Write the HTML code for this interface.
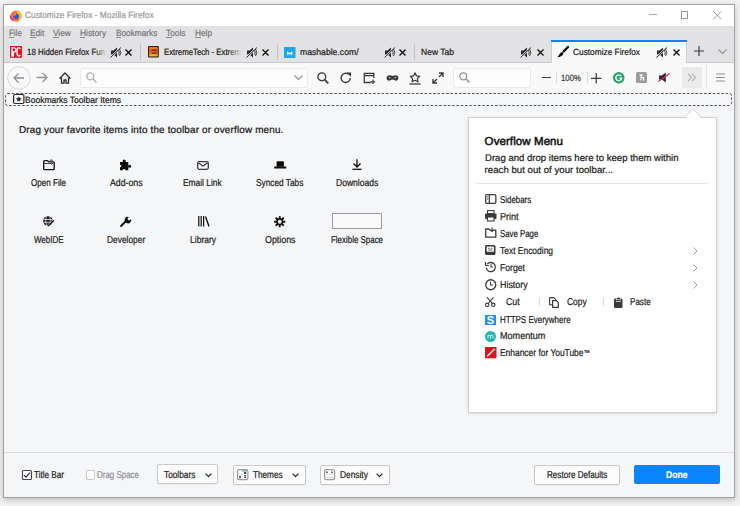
<!DOCTYPE html>
<html><head><meta charset="utf-8">
<style>
*{box-sizing:border-box;margin:0;padding:0}
html,body{width:740px;height:506px;overflow:hidden;background:#f2f2f2;font-family:"Liberation Sans",sans-serif;position:relative}
.t{position:absolute;white-space:nowrap;line-height:1;transform-origin:0 0;-webkit-text-stroke:0.22px currentColor;text-rendering:geometricPrecision}
.r{position:absolute}
svg{position:absolute;overflow:visible}
</style></head><body>
<div class="r" style="left:3.00px;top:4.00px;width:732.00px;height:494.00px;border:1px solid #a3a3a3;background:#f5f6f7;box-shadow:0 2px 6px rgba(0,0,0,.22)"></div>
<div class="r" style="left:4.00px;top:5.00px;width:730.00px;height:21.00px;background:#fff"></div>
<svg style="left:9.50px;top:9.50px" width="12" height="12" viewBox="0 0 12 12"><circle cx="6" cy="6" r="5.6" fill="#ff7139"/><path d="M6 0.4a5.6 5.6 0 0 1 5.6 5.6a5.6 5.6 0 0 1-2 4.3" fill="#ffbd2e"/><path d="M0.5 5.5a5.6 5.6 0 0 0 3 5.2" stroke="#e31587" stroke-width="1.2" fill="none"/><circle cx="6.2" cy="6.2" r="2.8" fill="#2a5ad9"/><path d="M3.4 5.6q1-2.6 3.8-2.4q-1.6 0.6-1.6 2.2" fill="#ff9a2e"/></svg>
<div class="t" style="left:25.30px;top:11.38px;font-size:9.00px;color:#9a9a9a;transform:scaleX(0.929);letter-spacing:0.000px;">Customize Firefox - Mozilla Firefox</div>
<div class="r" style="left:649.00px;top:14.20px;width:7.50px;height:1.00px;background:#a8a8a8"></div>
<div class="r" style="left:680.50px;top:11.00px;width:7.50px;height:7.50px;border:1px solid #9a9a9a"></div>
<svg style="left:713.00px;top:11.00px" width="8.5" height="8.5" viewBox="0 0 8.5 8.5"><path d="M0.3 0.3L8.2 8.2M8.2 0.3L0.3 8.2" stroke="#999" stroke-width="1"/></svg>
<div class="r" style="left:4.00px;top:26.00px;width:730.00px;height:36.00px;background:#e2e2e4"></div>
<div class="t" style="left:8.60px;top:29.18px;font-size:9.00px;color:#77777c;transform:scaleX(0.883);letter-spacing:0.000px;">File</div>
<div class="r" style="left:8.90px;top:37.00px;width:5.50px;height:0.90px;background:#8a8a8f"></div>
<div class="t" style="left:29.80px;top:29.18px;font-size:9.00px;color:#77777c;transform:scaleX(0.916);letter-spacing:0.000px;">Edit</div>
<div class="r" style="left:30.10px;top:37.00px;width:5.50px;height:0.90px;background:#8a8a8f"></div>
<div class="t" style="left:53.00px;top:29.18px;font-size:9.00px;color:#77777c;transform:scaleX(0.920);letter-spacing:0.000px;">View</div>
<div class="r" style="left:53.30px;top:37.00px;width:5.50px;height:0.90px;background:#8a8a8f"></div>
<div class="t" style="left:79.50px;top:29.18px;font-size:9.00px;color:#77777c;transform:scaleX(0.932);letter-spacing:0.000px;">History</div>
<div class="r" style="left:79.80px;top:37.00px;width:5.50px;height:0.90px;background:#8a8a8f"></div>
<div class="t" style="left:115.50px;top:29.18px;font-size:9.00px;color:#77777c;transform:scaleX(0.918);letter-spacing:0.000px;">Bookmarks</div>
<div class="r" style="left:115.80px;top:37.00px;width:5.50px;height:0.90px;background:#8a8a8f"></div>
<div class="t" style="left:166.00px;top:29.18px;font-size:9.00px;color:#77777c;transform:scaleX(0.923);letter-spacing:0.000px;">Tools</div>
<div class="r" style="left:166.30px;top:37.00px;width:5.50px;height:0.90px;background:#8a8a8f"></div>
<div class="t" style="left:195.00px;top:29.18px;font-size:9.00px;color:#77777c;transform:scaleX(0.918);letter-spacing:0.000px;">Help</div>
<div class="r" style="left:195.30px;top:37.00px;width:5.50px;height:0.90px;background:#8a8a8f"></div>
<div class="r" style="left:4.00px;top:62.00px;width:730.00px;height:1.00px;background:#c8c8cb"></div>
<svg style="left:10.30px;top:45.80px" width="12" height="11.8" viewBox="0 0 12 11.8"><rect width="12" height="11.8" fill="#e4151f"/><path d="M2 10V1.8h2.2q1.8 0 1.8 2.1t-1.8 2.1H3.3V10z" fill="none" stroke="#fff" stroke-width="1.3"/><path d="M10.3 3.2q-0.3-1.4-1.5-1.4q-1.8 0-1.8 4.1t1.8 4.1q1.2 0 1.5-1.4" fill="none" stroke="#fff" stroke-width="1.4"/></svg>
<div class="t" style="left:27.00px;top:48.38px;font-size:9.00px;color:#1c1c20;transform:scaleX(0.876);letter-spacing:0.000px;">18 Hidden Firefox Fun</div>
<div class="r" style="left:95.00px;top:44.00px;width:12.00px;height:16.00px;background:linear-gradient(90deg,rgba(226,226,228,0),#e2e2e4)"></div>
<svg style="left:110.00px;top:46.50px" width="12" height="11" viewBox="0 0 12 11"><path d="M1 3.5h2.5l3.5-3v10l-3.5-3H1z" fill="#2a2a2e"/><path d="M0.5 10.5L11 0.5" stroke="#e2e2e4" stroke-width="2"/><path d="M0.5 10.5L11 0.5" stroke="#2a2a2e" stroke-width="1"/><path d="M8.5 3.5q1.5 2 0 4M9.5 2q2.5 3.5 0 7" stroke="#2a2a2e" stroke-width="0.9" fill="none"/></svg>
<svg style="left:124.50px;top:48.50px" width="7" height="7" viewBox="0 0 7 7"><path d="M0.5 0.5L6.5 6.5M6.5 0.5L0.5 6.5" stroke="#0c0c0d" stroke-width="1.3"/></svg>
<div class="r" style="left:140.00px;top:43.50px;width:1.00px;height:16.50px;background:#c2c3c6"></div>
<svg style="left:148.00px;top:46.00px" width="10.8" height="11.5" viewBox="0 0 10.8 11.5"><defs><linearGradient id="eg" x1="0" y1="0" x2="0" y2="1"><stop offset="0" stop-color="#ff7a1a"/><stop offset="0.5" stop-color="#f25a14"/><stop offset="1" stop-color="#ffc21a"/></linearGradient></defs><rect width="10.8" height="11.5" rx="0.8" fill="#2a2018"/><rect x="1.1" y="1.1" width="8.6" height="9.3" fill="url(#eg)"/><path d="M3.6 3.5h5v1.2h-5zM3.6 6.6h5v1.2h-5z" fill="#3a2a1c"/></svg>
<div class="t" style="left:164.00px;top:48.38px;font-size:9.00px;color:#1c1c20;transform:scaleX(0.865);letter-spacing:0.000px;">ExtremeTech - Extrem</div>
<div class="r" style="left:228.00px;top:44.00px;width:14.00px;height:16.00px;background:linear-gradient(90deg,rgba(226,226,228,0),#e2e2e4)"></div>
<svg style="left:246.00px;top:46.50px" width="12" height="11" viewBox="0 0 12 11"><path d="M1 3.5h2.5l3.5-3v10l-3.5-3H1z" fill="#2a2a2e"/><path d="M0.5 10.5L11 0.5" stroke="#e2e2e4" stroke-width="2"/><path d="M0.5 10.5L11 0.5" stroke="#2a2a2e" stroke-width="1"/><path d="M8.5 3.5q1.5 2 0 4M9.5 2q2.5 3.5 0 7" stroke="#2a2a2e" stroke-width="0.9" fill="none"/></svg>
<svg style="left:261.50px;top:48.50px" width="7" height="7" viewBox="0 0 7 7"><path d="M0.5 0.5L6.5 6.5M6.5 0.5L0.5 6.5" stroke="#0c0c0d" stroke-width="1.3"/></svg>
<div class="r" style="left:277.00px;top:43.50px;width:1.00px;height:16.50px;background:#c2c3c6"></div>
<svg style="left:284.00px;top:46.60px" width="11.5" height="11" viewBox="0 0 11.5 11"><rect width="11.5" height="11" fill="#1ea7e8"/><path d="M3.8 8.3v-3l2 1.8l2-1.8v3" stroke="#fff" stroke-width="1.1" fill="none"/></svg>
<div class="t" style="left:300.00px;top:48.38px;font-size:9.00px;color:#1c1c20;transform:scaleX(0.959);letter-spacing:0.000px;">mashable.com/</div>
<svg style="left:384.00px;top:46.50px" width="12" height="11" viewBox="0 0 12 11"><path d="M1 3.5h2.5l3.5-3v10l-3.5-3H1z" fill="#2a2a2e"/><path d="M0.5 10.5L11 0.5" stroke="#e2e2e4" stroke-width="2"/><path d="M0.5 10.5L11 0.5" stroke="#2a2a2e" stroke-width="1"/><path d="M8.5 3.5q1.5 2 0 4M9.5 2q2.5 3.5 0 7" stroke="#2a2a2e" stroke-width="0.9" fill="none"/></svg>
<svg style="left:398.50px;top:48.50px" width="7" height="7" viewBox="0 0 7 7"><path d="M0.5 0.5L6.5 6.5M6.5 0.5L0.5 6.5" stroke="#0c0c0d" stroke-width="1.3"/></svg>
<div class="r" style="left:414.00px;top:43.50px;width:1.00px;height:16.50px;background:#c2c3c6"></div>
<div class="t" style="left:421.00px;top:48.38px;font-size:9.00px;color:#1c1c20;transform:scaleX(0.947);letter-spacing:0.000px;">New Tab</div>
<svg style="left:520.00px;top:46.50px" width="12" height="11" viewBox="0 0 12 11"><path d="M1 3.5h2.5l3.5-3v10l-3.5-3H1z" fill="#2a2a2e"/><path d="M0.5 10.5L11 0.5" stroke="#e2e2e4" stroke-width="2"/><path d="M0.5 10.5L11 0.5" stroke="#2a2a2e" stroke-width="1"/><path d="M8.5 3.5q1.5 2 0 4M9.5 2q2.5 3.5 0 7" stroke="#2a2a2e" stroke-width="0.9" fill="none"/></svg>
<svg style="left:536.50px;top:48.50px" width="7" height="7" viewBox="0 0 7 7"><path d="M0.5 0.5L6.5 6.5M6.5 0.5L0.5 6.5" stroke="#0c0c0d" stroke-width="1.3"/></svg>
<div class="r" style="left:550.50px;top:40.00px;width:136.50px;height:23.00px;background:#f9f9fa;border-left:1px solid #cfd0d3;border-right:1px solid #cfd0d3"></div>
<div class="r" style="left:550.50px;top:40.00px;width:136.50px;height:2.00px;background:#0a84ff"></div>
<svg style="left:557.00px;top:46.00px" width="12" height="11.5" viewBox="0 0 12 11.5"><path d="M11 1L6.6 5.4" stroke="#0c0c0d" stroke-width="2.3" stroke-linecap="round"/><path d="M5.4 6.1q1.2 0.4 1 1.6q-0.6 1.6-2.4 2.6q-1.8 0.9-3.7 1q1.2-1.2 2-2.8q0.9-2.2 3.1-2.4z" fill="#0c0c0d"/></svg>
<div class="t" style="left:573.00px;top:48.38px;font-size:9.00px;color:#1c1c20;transform:scaleX(0.924);letter-spacing:0.000px;">Customize Firefox</div>
<svg style="left:656.00px;top:46.50px" width="12" height="11" viewBox="0 0 12 11"><path d="M1 3.5h2.5l3.5-3v10l-3.5-3H1z" fill="#2a2a2e"/><path d="M0.5 10.5L11 0.5" stroke="#e2e2e4" stroke-width="2"/><path d="M0.5 10.5L11 0.5" stroke="#2a2a2e" stroke-width="1"/><path d="M8.5 3.5q1.5 2 0 4M9.5 2q2.5 3.5 0 7" stroke="#2a2a2e" stroke-width="0.9" fill="none"/></svg>
<svg style="left:673.00px;top:48.50px" width="7" height="7" viewBox="0 0 7 7"><path d="M0.5 0.5L6.5 6.5M6.5 0.5L0.5 6.5" stroke="#0c0c0d" stroke-width="1.3"/></svg>
<svg style="left:694.00px;top:46.00px" width="10" height="10" viewBox="0 0 10 10"><path d="M5 0v10M0 5h10" stroke="#38383d" stroke-width="1.15"/></svg>
<svg style="left:718.00px;top:49.00px" width="9" height="5" viewBox="0 0 9 5"><path d="M0.5 0.5L4.5 4.5L8.5 0.5" stroke="#96969c" stroke-width="1.2" fill="none"/></svg>
<div class="r" style="left:4.00px;top:63.00px;width:730.00px;height:28.00px;background:#f9f9fa"></div>
<svg style="left:6.50px;top:65.50px" width="24" height="24" viewBox="0 0 24 24"><circle cx="12" cy="12" r="11.3" fill="#f9f9fa" stroke="#d7d7db" stroke-width="1"/><path d="M17 12H7M11.5 7.5L7 12l4.5 4.5" stroke="#8f8f9d" stroke-width="1.3" fill="none"/></svg>
<svg style="left:36.00px;top:72.00px" width="12" height="11" viewBox="0 0 12 11"><path d="M0.5 5.5h10.5M6.5 1l4.5 4.5L6.5 10" stroke="#8f8f9d" stroke-width="1.3" fill="none"/></svg>
<svg style="left:59.00px;top:71.50px" width="12" height="12" viewBox="0 0 12 12"><path d="M6 1L0.8 6.2h1.7v5h2.5v-3.2h2v3.2h2.5v-5h1.7z" stroke="#2a2a2e" stroke-width="1.3" fill="none" stroke-linejoin="round"/></svg>
<div class="r" style="left:80.00px;top:67.50px;width:227.50px;height:20.00px;background:#fdfdfd;border:1px solid #ebebed;border-radius:2px"></div>
<svg style="left:86.00px;top:72.00px" width="11" height="11" viewBox="0 0 11 11"><circle cx="4.3" cy="4.3" r="3.5" stroke="#b1b1b3" stroke-width="1.3" fill="none"/><path d="M6.8 6.8L10.5 10.5" stroke="#b1b1b3" stroke-width="1.5"/></svg>
<svg style="left:294.00px;top:75.00px" width="9" height="5" viewBox="0 0 9 5"><path d="M0.5 0.5L4.5 4.5L8.5 0.5" stroke="#8f8f9d" stroke-width="1.1" fill="none"/></svg>
<svg style="left:317.00px;top:72.00px" width="12" height="12" viewBox="0 0 12 12"><circle cx="4.8" cy="4.8" r="3.9" stroke="#3a3a3f" stroke-width="1.4" fill="none"/><path d="M7.6 7.6L11.3 11.3" stroke="#3a3a3f" stroke-width="1.7"/></svg>
<svg style="left:340.00px;top:72.00px" width="12" height="12" viewBox="0 0 12 12"><path d="M10.3 6A4.6 4.6 0 1 1 8.6 2.3" stroke="#3a3a3f" stroke-width="1.4" fill="none"/><path d="M6.5 0.5h4.5v4.5z" fill="#3a3a3f"/></svg>
<svg style="left:363.00px;top:72.00px" width="13" height="12" viewBox="0 0 13 12"><path d="M8 10.5H1.3V1.3h9.5V6" stroke="#3a3a3f" stroke-width="1.3" fill="none"/><path d="M1.3 3.6h9.5" stroke="#3a3a3f" stroke-width="1.3"/><path d="M10 7.5v4.5M7.7 9.8h4.5" stroke="#3a3a3f" stroke-width="1.2"/></svg>
<svg style="left:386.00px;top:73.50px" width="13" height="8" viewBox="0 0 13 8"><path d="M1 2.2C2.5 0.8 5 1 6.5 2C8 1 10.5 0.8 12 2.2C12.8 3.5 12.5 6 10.8 6.6C9.2 7.2 7.8 5.6 6.5 5.6S3.8 7.2 2.2 6.6C0.5 6 0.2 3.5 1 2.2z" fill="#3a3a3f"/><path d="M2.4 3.6q1.3-0.9 2.6 0.3q-1.3 0.8-2.6-0.3zM10.6 3.6q-1.3-0.9-2.6 0.3q1.3 0.8 2.6-0.3z" fill="#f9f9fa"/></svg>
<svg style="left:409.00px;top:71.50px" width="12" height="13" viewBox="0 0 12 13"><path d="M6 0.8l1.5 3.1l3.3 0.4l-2.4 2.3l0.6 3.2L6 8.2L3 9.8l0.6-3.2L1.2 4.3l3.3-0.4z" stroke="#3a3a3f" stroke-width="1.2" fill="none" stroke-linejoin="round"/><path d="M0.5 12h11" stroke="#3a3a3f" stroke-width="1.3"/></svg>
<svg style="left:432.00px;top:72.00px" width="12" height="12" viewBox="0 0 12 12"><path d="M7 1h4v4M11 1L7 5M5 11H1V7M1 11l4-4" stroke="#3a3a3f" stroke-width="1.4" fill="none"/></svg>
<div class="r" style="left:452.50px;top:67.50px;width:78.00px;height:20.00px;background:#fdfdfd;border:1px solid #ebebed;border-radius:2px"></div>
<svg style="left:459.00px;top:72.00px" width="11" height="11" viewBox="0 0 11 11"><circle cx="4.3" cy="4.3" r="3.5" stroke="#8f8f9d" stroke-width="1.3" fill="none"/><path d="M6.8 6.8L10.5 10.5" stroke="#8f8f9d" stroke-width="1.5"/></svg>
<div class="r" style="left:541.50px;top:76.80px;width:9.00px;height:1.30px;background:#3a3a3f"></div>
<div class="r" style="left:556.00px;top:72.00px;width:1.00px;height:10.50px;background:#dcdcde"></div>
<div class="t" style="left:561.00px;top:73.58px;font-size:9.00px;color:#3a3a3f;transform:scaleX(0.869);letter-spacing:0.000px;">100%</div>
<div class="r" style="left:587.00px;top:72.00px;width:1.00px;height:10.50px;background:#dcdcde"></div>
<svg style="left:591.00px;top:72.50px" width="10.5" height="10.5" viewBox="0 0 10.5 10.5"><path d="M5.25 0v10.5M0 5.25h10.5" stroke="#3a3a3f" stroke-width="1.25"/></svg>
<svg style="left:613.00px;top:72.00px" width="11.5" height="11.5" viewBox="0 0 11.5 11.5"><circle cx="5.75" cy="5.75" r="5.75" fill="#1ea362"/><path d="M8.2 4.2A2.9 2.9 0 1 0 8.6 6.3H6.3" stroke="#fff" stroke-width="1.4" fill="none"/></svg>
<svg style="left:636.00px;top:72.00px" width="11" height="11" viewBox="0 0 11 11"><rect width="11" height="11" rx="1.5" fill="#9d9d9d"/><path d="M3.5 3h3.5M5 3v5.5M5 5.5h2.5v3" stroke="#fff" stroke-width="1.2" fill="none"/></svg>
<svg style="left:658.00px;top:72.00px" width="12" height="11" viewBox="0 0 12 11"><path d="M1 3.5h2.8l4-3v10l-4-3H1z" fill="#2a2a2e"/><path d="M0.3 9.5L11.7 1.5" stroke="#e22850" stroke-width="1.3"/></svg>
<div class="r" style="left:682.00px;top:67.00px;width:20.00px;height:21.00px;background:#ebebed;border-radius:1px"></div>
<svg style="left:687.00px;top:73.00px" width="10" height="9" viewBox="0 0 10 9"><path d="M1 0.8l3.5 3.7L1 8.2M5 0.8l3.5 3.7L5 8.2" stroke="#b1b1b3" stroke-width="1.1" fill="none"/></svg>
<div class="r" style="left:706.00px;top:65.00px;width:1.00px;height:24.00px;background:#e4e4e6"></div>
<svg style="left:716.00px;top:73.00px" width="9" height="9" viewBox="0 0 9 9"><path d="M0 1h9M0 4.5h9M0 8h9" stroke="#8f8f9d" stroke-width="1.2"/></svg>
<svg style="left:5.00px;top:93.00px" width="727" height="13" viewBox="0 0 727 13"><rect x="0.5" y="0.5" width="726" height="12" rx="2" fill="none" stroke="#55555a" stroke-width="1" stroke-dasharray="2.6 1.7"/></svg>
<svg style="left:13.00px;top:93.00px" width="11.5" height="11" viewBox="0 0 11.5 11"><rect x="0.6" y="1.5" width="10.3" height="9" rx="1.2" stroke="#2a2a2e" stroke-width="1.2" fill="none"/><path d="M5.75 3.2l0.9 1.8l2 0.25l-1.45 1.4l0.35 1.95L5.75 7.7L4 8.6l0.35-1.95L2.9 5.25l2-0.25z" fill="#2a2a2e"/></svg>
<div class="t" style="left:24.50px;top:95.88px;font-size:9.00px;color:#1c1c20;transform:scaleX(0.947);letter-spacing:0.000px;">Bookmarks Toolbar Items</div>
<div class="t" style="left:19.00px;top:125.52px;font-size:9.90px;color:#1c1c20;transform:scaleX(1.000);letter-spacing:0.176px;-webkit-text-stroke:0.22px #0c0c0d;">Drag your favorite items into the toolbar or overflow menu.</div>
<div class="t" style="left:31.00px;top:178.53px;font-size:10.00px;color:#1c1c20;transform:scaleX(0.807);letter-spacing:0.000px;">Open File</div>
<div class="t" style="left:109.50px;top:178.53px;font-size:10.00px;color:#1c1c20;transform:scaleX(0.873);letter-spacing:0.000px;">Add-ons</div>
<div class="t" style="left:183.40px;top:178.53px;font-size:10.00px;color:#1c1c20;transform:scaleX(0.837);letter-spacing:0.000px;">Email Link</div>
<div class="t" style="left:256.40px;top:178.53px;font-size:10.00px;color:#1c1c20;transform:scaleX(0.829);letter-spacing:0.000px;">Synced Tabs</div>
<div class="t" style="left:336.00px;top:178.53px;font-size:10.00px;color:#1c1c20;transform:scaleX(0.855);letter-spacing:0.000px;">Downloads</div>
<div class="t" style="left:34.00px;top:235.53px;font-size:10.00px;color:#1c1c20;transform:scaleX(0.796);letter-spacing:0.000px;">WebIDE</div>
<div class="t" style="left:106.80px;top:235.53px;font-size:10.00px;color:#1c1c20;transform:scaleX(0.838);letter-spacing:0.000px;">Developer</div>
<div class="t" style="left:189.60px;top:235.53px;font-size:10.00px;color:#1c1c20;transform:scaleX(0.854);letter-spacing:0.000px;">Library</div>
<div class="t" style="left:264.80px;top:235.53px;font-size:10.00px;color:#1c1c20;transform:scaleX(0.885);letter-spacing:0.000px;">Options</div>
<div class="t" style="left:331.00px;top:235.53px;font-size:10.00px;color:#1c1c20;transform:scaleX(0.793);letter-spacing:0.000px;">Flexible Space</div>
<svg style="left:42.80px;top:158.80px" width="11.5" height="11" viewBox="0 0 11.5 11"><path d="M0.7 2.6q0-1 1-1h2.8l1.2 1.2h4.6q0.9 0 0.9 0.9v6q0 0.9-0.9 0.9H1.6q-0.9 0-0.9-0.9z" stroke="#0c0c0d" stroke-width="1.3" fill="none" stroke-linejoin="round"/><path d="M1 4.5h9.2" stroke="#0c0c0d" stroke-width="0.8"/><path d="M8.3 5.8V0.8M6.8 2.2l1.5-1.5l1.5 1.5" stroke="#6a6a6e" stroke-width="1.1" fill="none"/></svg>
<svg style="left:120.00px;top:158.80px" width="11.5" height="11.5" viewBox="0 0 11.5 11.5"><rect x="0" y="3" width="8.3" height="8.3" fill="#0c0c0d"/><circle cx="4.2" cy="2" r="1.6" fill="#0c0c0d"/><circle cx="9.6" cy="7.2" r="1.5" fill="#0c0c0d"/><circle cx="0" cy="7" r="1.3" fill="#f5f6f7"/><circle cx="4.2" cy="11.3" r="1.3" fill="#f5f6f7"/></svg>
<svg style="left:196.50px;top:160.50px" width="12" height="9" viewBox="0 0 12 9"><rect x="0.7" y="0.7" width="10.6" height="7.6" rx="1.5" stroke="#3a3a3f" stroke-width="1.3" fill="none"/><path d="M1.5 2l4.5 3l4.5-3" stroke="#3a3a3f" stroke-width="1.2" fill="none"/></svg>
<svg style="left:273.50px;top:160.50px" width="12.5" height="8" viewBox="0 0 12.5 8"><path d="M2.6 1.3q0-1 1-1h5.3q1 0 1 1V5.8H2.6z" fill="#0c0c0d"/><path d="M0.2 5.6h12.1v1.1q0 0.9-0.9 0.9H1.1q-0.9 0-0.9-0.9z" fill="#0c0c0d"/></svg>
<svg style="left:351.80px;top:159.00px" width="10" height="11" viewBox="0 0 10 11"><path d="M5 0.3v7.5M1.5 4.5L5 8l3.5-3.5" stroke="#0c0c0d" stroke-width="1.3" fill="none"/><path d="M0.5 10.3h9" stroke="#0c0c0d" stroke-width="1.3"/></svg>
<svg style="left:42.50px;top:215.80px" width="12" height="11.5" viewBox="0 0 12 11.5"><circle cx="5" cy="5" r="4.8" fill="#1a1a1d"/><path d="M0.6 3.5h8.8M0.4 6.3h8M3.2 0.5q-1.2 4.5 0.3 9M6.6 0.5q1.2 3 0.5 5" stroke="#f5f6f7" stroke-width="0.75" fill="none"/><path d="M4.2 10.8l0.4-1.8l5.6-5.4l1.4 1.4l-5.6 5.4z" fill="#1a1a1d" stroke="#f5f6f7" stroke-width="0.6"/></svg>
<svg style="left:120.00px;top:215.50px" width="10.5" height="11" viewBox="0 0 10.5 11"><path d="M1 10L5.5 5.5" stroke="#0c0c0d" stroke-width="1.8" stroke-linecap="round"/><path d="M5 5.5a3.2 3.2 0 0 1 4-4.5L7.5 2.5l0.6 1.4l1.4 0.6L11 3a3.2 3.2 0 0 1-4.5 4z" fill="#0c0c0d"/></svg>
<svg style="left:197.50px;top:216.00px" width="11.5" height="10.5" viewBox="0 0 11.5 10.5"><path d="M0.8 0v10.5M3.2 0v10.5M5.6 0v10.5" stroke="#0c0c0d" stroke-width="1.2"/><path d="M7.5 0.5l3.5 10" stroke="#0c0c0d" stroke-width="1.3"/></svg>
<svg style="left:274.00px;top:215.50px" width="11.5" height="11.5" viewBox="0 0 11.5 11.5"><g transform="translate(5.75 5.75)"><path d="M0-5.6V5.6M-5.6 0H5.6M-4 -4L4 4M4 -4L-4 4" stroke="#0c0c0d" stroke-width="1.9"/><circle r="3.4" fill="#0c0c0d"/><circle r="1.9" fill="#f5f6f7"/></g></svg>
<div class="r" style="left:331.50px;top:212.50px;width:50.50px;height:16.50px;border:1px solid #9d9da1;background:#fafafb"></div>
<div class="r" style="left:468.00px;top:116.50px;width:248.50px;height:296.00px;background:#fff;border:1px solid #d0d0d3;box-shadow:0 1px 3px rgba(0,0,0,.12)"></div>
<svg style="left:684.50px;top:108.00px" width="16" height="9" viewBox="0 0 16 9"><path d="M0.5 8.5L8 0.8L15.5 8.5" fill="#fff" stroke="#d8d8da" stroke-width="1"/><path d="M1.3 9.2h13.4" stroke="#fff" stroke-width="1.6"/></svg>
<div class="t" style="left:484.60px;top:137.47px;font-size:11.50px;color:#1c1c20;transform:scaleX(1.000);letter-spacing:0.089px;-webkit-text-stroke:0.5px #0c0c0d;">Overflow Menu</div>
<div class="t" style="left:484.60px;top:154.07px;font-size:9.60px;color:#1c1c20;transform:scaleX(0.997);letter-spacing:0.000px;">Drag and drop items here to keep them within</div>
<div class="t" style="left:484.60px;top:166.17px;font-size:9.60px;color:#1c1c20;transform:scaleX(1.000);letter-spacing:0.031px;">reach but out of your toolbar...</div>
<div class="r" style="left:476.00px;top:182.50px;width:232.00px;height:1.00px;background:#e6e6e8"></div>
<div class="t" style="left:500.20px;top:195.53px;font-size:10.00px;color:#1c1c20;transform:scaleX(0.788);letter-spacing:0.000px;">Sidebars</div>
<div class="t" style="left:500.20px;top:212.53px;font-size:10.00px;color:#1c1c20;transform:scaleX(0.905);letter-spacing:0.000px;">Print</div>
<div class="t" style="left:500.20px;top:229.53px;font-size:10.00px;color:#1c1c20;transform:scaleX(0.783);letter-spacing:0.000px;">Save Page</div>
<div class="t" style="left:500.20px;top:246.63px;font-size:10.00px;color:#1c1c20;transform:scaleX(0.844);letter-spacing:0.000px;">Text Encoding</div>
<div class="t" style="left:500.20px;top:263.64px;font-size:10.00px;color:#1c1c20;transform:scaleX(0.865);letter-spacing:0.000px;">Forget</div>
<div class="t" style="left:500.20px;top:280.74px;font-size:10.00px;color:#1c1c20;transform:scaleX(0.887);letter-spacing:0.000px;">History</div>
<svg style="left:484.50px;top:193.80px" width="11.5" height="10" viewBox="0 0 11.5 10"><rect x="0.65" y="0.65" width="10.2" height="8.7" rx="1.3" stroke="#3a3a3f" stroke-width="1.3" fill="none"/><path d="M4.3 1v8" stroke="#3a3a3f" stroke-width="1.2"/><path d="M2 3h1.3M2 5h1.3" stroke="#3a3a3f" stroke-width="0.9"/></svg>
<svg style="left:484.50px;top:209.60px" width="11.5" height="11.5" viewBox="0 0 11.5 11.5"><rect x="2.5" y="0.6" width="6.5" height="3" stroke="#3a3a3f" stroke-width="1.1" fill="none"/><rect x="0" y="3.5" width="11.5" height="5.5" rx="1" fill="#3a3a3f"/><rect x="2.5" y="7" width="6.5" height="4" fill="#fff" stroke="#3a3a3f" stroke-width="1.1"/></svg>
<svg style="left:484.50px;top:226.80px" width="11.5" height="11" viewBox="0 0 11.5 11"><path d="M0.7 2h3.2l1 1.2h5.9v7H0.7z" stroke="#3a3a3f" stroke-width="1.3" fill="none" stroke-linejoin="round"/><path d="M7 0.3v4.5M5.3 3l1.7 1.8L8.7 3" stroke="#3a3a3f" stroke-width="1" fill="none"/></svg>
<svg style="left:485.00px;top:244.80px" width="10.5" height="10" viewBox="0 0 10.5 10"><rect x="0" y="0" width="10.5" height="10" rx="1.6" fill="#3a3a3f"/><rect x="1.6" y="1.5" width="7.3" height="5.2" rx="0.6" fill="#fff"/><path d="M3 3.3h1.7M5.8 3.3h1.7M3.2 5h4.2" stroke="#3a3a3f" stroke-width="0.8"/></svg>
<svg style="left:484.50px;top:261.20px" width="11.5" height="11.5" viewBox="0 0 11.5 11.5"><path d="M2.2 3.2A4.6 4.6 0 1 1 1.2 6.5" stroke="#3a3a3f" stroke-width="1.3" fill="none"/><path d="M0.5 1v3.5h3.5" stroke="#3a3a3f" stroke-width="1.2" fill="none"/><path d="M6 3v3h2" stroke="#3a3a3f" stroke-width="1.1" fill="none"/></svg>
<svg style="left:484.50px;top:279.30px" width="11.5" height="11.5" viewBox="0 0 11.5 11.5"><circle cx="5.75" cy="5.75" r="5" stroke="#3a3a3f" stroke-width="1.3" fill="none"/><path d="M5.5 2.8v3.2h2.5" stroke="#3a3a3f" stroke-width="1.1" fill="none"/></svg>
<svg style="left:693.00px;top:246.50px" width="5" height="8" viewBox="0 0 5 8"><path d="M0.5 0.5L4 4L0.5 7.5" stroke="#a0a0a4" stroke-width="1" fill="none"/></svg>
<svg style="left:693.00px;top:263.50px" width="5" height="8" viewBox="0 0 5 8"><path d="M0.5 0.5L4 4L0.5 7.5" stroke="#a0a0a4" stroke-width="1" fill="none"/></svg>
<svg style="left:693.00px;top:280.50px" width="5" height="8" viewBox="0 0 5 8"><path d="M0.5 0.5L4 4L0.5 7.5" stroke="#a0a0a4" stroke-width="1" fill="none"/></svg>
<svg style="left:485.00px;top:297.00px" width="10.5" height="10" viewBox="0 0 10.5 10"><circle cx="2.2" cy="7.8" r="1.7" stroke="#3a3a3f" stroke-width="1.1" fill="none"/><circle cx="8.3" cy="7.8" r="1.7" stroke="#3a3a3f" stroke-width="1.1" fill="none"/><path d="M3.2 6.5L8.5 0.3M7.3 6.5L2 0.3" stroke="#3a3a3f" stroke-width="1.1"/></svg>
<div class="t" style="left:506.30px;top:298.04px;font-size:10.00px;color:#1c1c20;transform:scaleX(0.880);letter-spacing:0.000px;">Cut</div>
<div class="r" style="left:539.00px;top:298.00px;width:1.00px;height:8.00px;background:#d8d8da"></div>
<svg style="left:549.00px;top:296.50px" width="10" height="11" viewBox="0 0 10 11"><path d="M0.6 0.6h4.2l1.8 1.8v2.6" stroke="#3a3a3f" stroke-width="1.1" fill="none"/><path d="M0.6 0.6v7.2h2.7" stroke="#3a3a3f" stroke-width="1.1" fill="none"/><path d="M3.6 3.6h3.7l2 2v4.8H3.6z" stroke="#3a3a3f" stroke-width="1.2" fill="#fff" stroke-linejoin="round"/></svg>
<div class="t" style="left:567.00px;top:298.04px;font-size:10.00px;color:#1c1c20;transform:scaleX(0.844);letter-spacing:0.000px;">Copy</div>
<div class="r" style="left:603.40px;top:298.00px;width:1.00px;height:8.00px;background:#d8d8da"></div>
<svg style="left:613.50px;top:296.50px" width="8.5" height="11" viewBox="0 0 8.5 11"><rect x="0" y="1.5" width="8.5" height="9.5" rx="1.3" fill="#3a3a3f"/><rect x="2.3" y="0.3" width="4" height="2.5" fill="#3a3a3f" stroke="#fff" stroke-width="0.6"/><path d="M1.8 4.5h5" stroke="#fff" stroke-width="0.7"/></svg>
<div class="t" style="left:630.30px;top:298.04px;font-size:10.00px;color:#1c1c20;transform:scaleX(0.806);letter-spacing:0.000px;">Paste</div>
<svg style="left:484.50px;top:314.50px" width="11" height="10" viewBox="0 0 11 10"><rect width="11" height="10" fill="#1e90ff"/><text x="5.5" y="9.2" font-family="Liberation Sans" font-weight="bold" font-size="11" fill="#fff" text-anchor="middle">S</text></svg>
<div class="t" style="left:500.20px;top:315.74px;font-size:10.00px;color:#1c1c20;transform:scaleX(0.799);letter-spacing:0.000px;">HTTPS Everywhere</div>
<svg style="left:484.50px;top:330.50px" width="11" height="11" viewBox="0 0 11 11"><circle cx="5.5" cy="5.5" r="5.5" fill="#22b5b5"/><path d="M3 7.5v-3.2M3 5.2q0-1 1.25-1t1.25 1V7.5M5.5 5.2q0-1 1.25-1t1.25 1V7.5" stroke="#fff" stroke-width="0.8" fill="none"/></svg>
<div class="t" style="left:500.20px;top:332.44px;font-size:10.00px;color:#1c1c20;transform:scaleX(0.908);letter-spacing:0.000px;">Momentum</div>
<svg style="left:484.50px;top:347.30px" width="11.5" height="11.3" viewBox="0 0 11.5 11.3"><rect width="11.5" height="11.3" fill="#d9141c"/><path d="M2.3 9.2L8.3 3.2" stroke="#fff" stroke-width="1.5"/><circle cx="9" cy="2.5" r="1" fill="#fff"/></svg>
<div class="t" style="left:500.20px;top:349.34px;font-size:10.00px;color:#1c1c20;transform:scaleX(0.842);letter-spacing:0.000px;">Enhancer for YouTube</div>
<div class="t" style="left:584.30px;top:349.94px;font-size:4.20px;color:#1c1c20;transform:scaleX(0.907);letter-spacing:0.000px;">TM</div>
<div class="r" style="left:4.00px;top:452.00px;width:730.00px;height:1.00px;background:#dcdcdf"></div>
<svg style="left:22.00px;top:470.00px" width="10" height="10" viewBox="0 0 10 10"><rect x="0.5" y="0.5" width="9" height="9" rx="1" stroke="#48484c" stroke-width="1.1" fill="#fff"/><path d="M2 5.2l2 2l4-4.5" stroke="#2a2a2e" stroke-width="1.2" fill="none"/></svg>
<div class="t" style="left:34.10px;top:471.14px;font-size:10.00px;color:#1c1c20;transform:scaleX(0.811);letter-spacing:0.000px;">Title Bar</div>
<div class="r" style="left:86.00px;top:470.00px;width:9.00px;height:10.00px;border:1px solid #c8c8cc;background:#fbfbfb;border-radius:1px"></div>
<div class="t" style="left:97.00px;top:471.14px;font-size:10.00px;color:#8f8f95;transform:scaleX(0.795);letter-spacing:0.000px;">Drag Space</div>
<div class="r" style="left:157.00px;top:464.30px;width:61.00px;height:20.00px;background:#fcfcfc;border:1px solid #c9c9cd;border-radius:2px;box-shadow:0 1px 1px rgba(0,0,0,.04)"></div>
<div class="t" style="left:164.00px;top:471.14px;font-size:10.00px;color:#1c1c20;transform:scaleX(0.828);letter-spacing:0.000px;">Toolbars</div>
<svg style="left:205.00px;top:472.50px" width="7" height="5" viewBox="0 0 7 5"><path d="M0.6 0.6L3.5 3.6L6.4 0.6" stroke="#2a2a2e" stroke-width="1.3" fill="none"/></svg>
<div class="r" style="left:232.50px;top:464.50px;width:73.00px;height:20.00px;background:#fcfcfc;border:1px solid #c9c9cd;border-radius:2px;box-shadow:0 1px 1px rgba(0,0,0,.04)"></div>
<svg style="left:237.20px;top:469.00px" width="11.5" height="11.2" viewBox="0 0 11.5 11.2"><rect x="0.6" y="0.6" width="10.3" height="10" rx="1.6" stroke="#9a9a9e" stroke-width="1.2" fill="#fff"/><path d="M5 1.2h5.3v1.3H5z" fill="#5b9bd5"/><rect x="7" y="3" width="2.2" height="2" fill="#48484c"/><rect x="7" y="6.2" width="2.2" height="1" fill="#48484c"/><rect x="7" y="7.8" width="2.2" height="1.2" fill="#48484c"/><rect x="2" y="6.8" width="2" height="2.4" fill="#6a6a6e"/></svg>
<div class="t" style="left:252.90px;top:471.14px;font-size:10.00px;color:#1c1c20;transform:scaleX(0.817);letter-spacing:0.000px;">Themes</div>
<svg style="left:292.00px;top:472.50px" width="7" height="5" viewBox="0 0 7 5"><path d="M0.6 0.6L3.5 3.6L6.4 0.6" stroke="#2a2a2e" stroke-width="1.3" fill="none"/></svg>
<div class="r" style="left:319.50px;top:464.50px;width:70.50px;height:20.00px;background:#fcfcfc;border:1px solid #c9c9cd;border-radius:2px;box-shadow:0 1px 1px rgba(0,0,0,.04)"></div>
<svg style="left:324.30px;top:469.00px" width="11.2" height="11.2" viewBox="0 0 11.2 11.2"><rect x="0.6" y="0.6" width="10" height="10" rx="1.6" stroke="#9a9a9e" stroke-width="1.2" fill="#fff"/><circle cx="3" cy="3.2" r="1" fill="#6a6a6e"/><circle cx="8" cy="3.2" r="1" fill="#6a6a6e"/><path d="M2 5.3h7.2M2 8.3h7.2" stroke="#c8c8cc" stroke-width="0.8"/></svg>
<div class="t" style="left:339.70px;top:471.14px;font-size:10.00px;color:#1c1c20;transform:scaleX(0.834);letter-spacing:0.000px;">Density</div>
<svg style="left:376.30px;top:472.50px" width="7" height="5" viewBox="0 0 7 5"><path d="M0.6 0.6L3.5 3.6L6.4 0.6" stroke="#2a2a2e" stroke-width="1.3" fill="none"/></svg>
<div class="r" style="left:533.50px;top:464.50px;width:86.50px;height:20.30px;background:#fcfcfc;border:1px solid #c9c9cd;border-radius:2px;box-shadow:0 1px 1px rgba(0,0,0,.04)"></div>
<div class="t" style="left:547.00px;top:471.14px;font-size:10.00px;color:#1c1c20;transform:scaleX(0.811);letter-spacing:0.000px;">Restore Defaults</div>
<div class="r" style="left:633.50px;top:464.50px;width:86.00px;height:19.50px;background:#0a84ff;border-radius:2px"></div>
<div class="t" style="left:666.00px;top:471.14px;font-size:10.00px;color:#ffffff;font-weight:bold;transform:scaleX(0.856);letter-spacing:0.000px;">Done</div>
</body></html>
